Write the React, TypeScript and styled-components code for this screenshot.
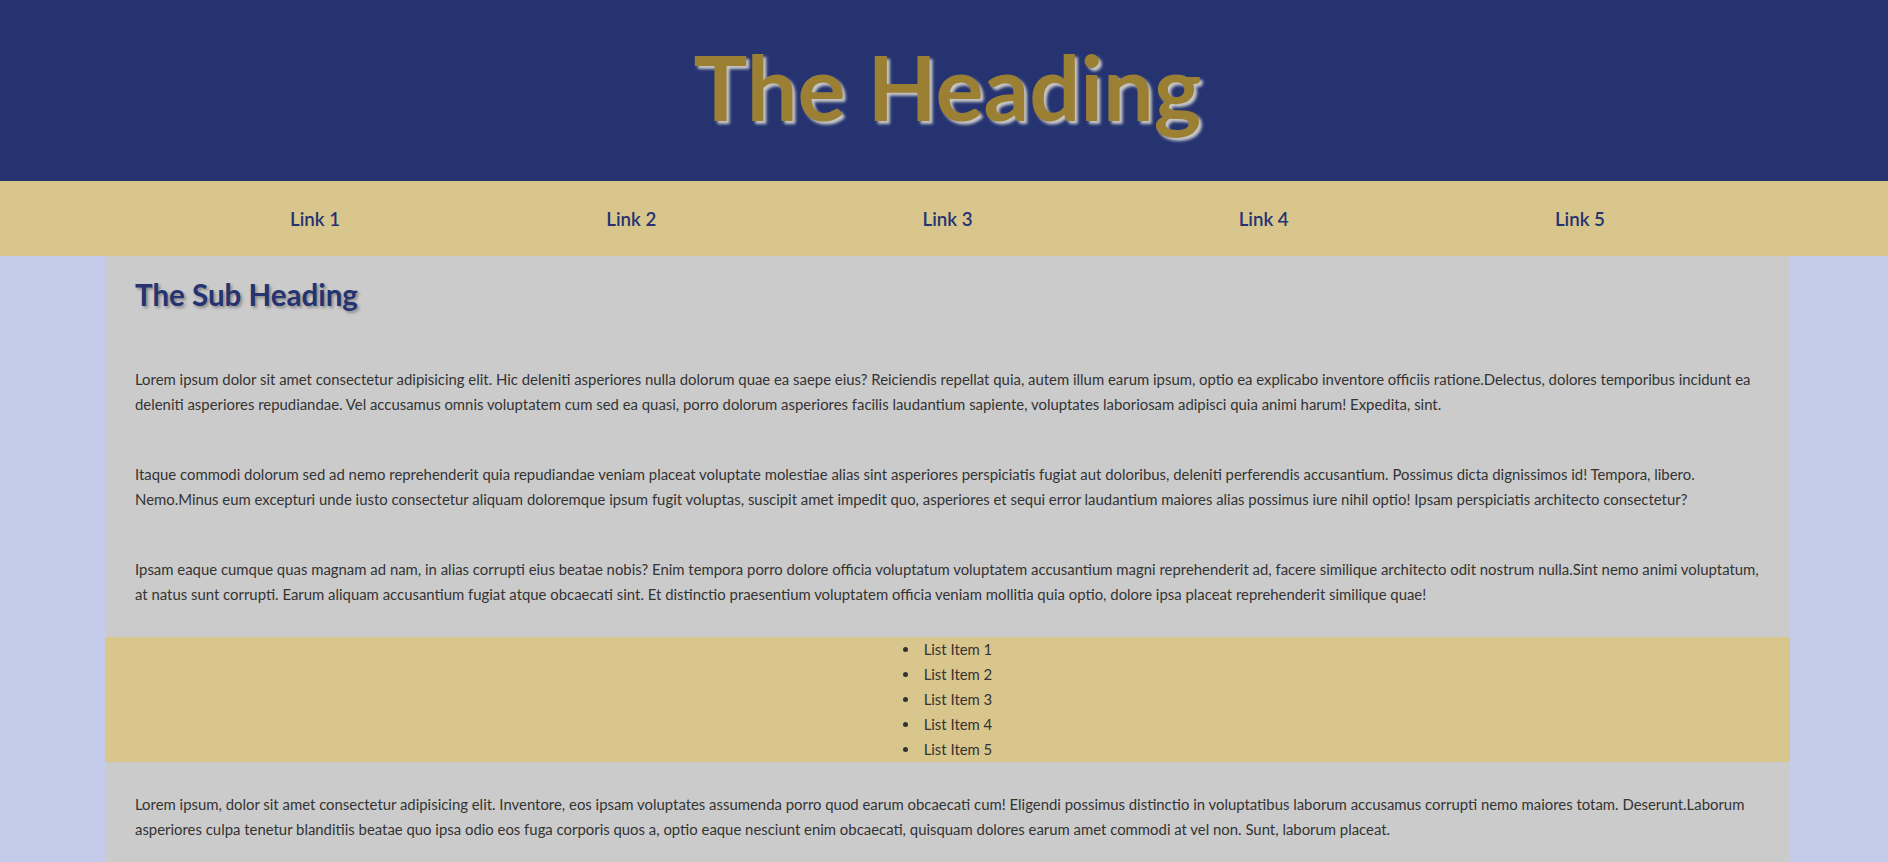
import React from "react";
import styled, { createGlobalStyle } from "styled-components";

const Global = createGlobalStyle`
  html, body { margin: 0; padding: 0; }
  body {
    background: #c5cbeb;
    font-family: Lato, "Open Sans", sans-serif;
    overflow: hidden;
  }
  * { box-sizing: border-box; }
`;

const Page = styled.div`
  width: 1895px;
`;

const Header = styled.header`
  background: #253370;
  padding: 32px 0 41px;
  text-align: center;
`;

const Title = styled.h1`
  margin: 0;
  font-size: 90px;
  font-weight: 700;
  line-height: 108px;
  color: #9b7f33;
  text-shadow: 3px 3px 3px #c8c8c8;
`;

const Nav = styled.nav`
  background: #d9c68d;
  height: 75px;
  display: flex;
  align-items: center;
`;

const NavList = styled.ul`
  list-style: none;
  margin: 0 auto;
  padding: 0;
  width: 1581px;
  display: grid;
  grid-template-columns: repeat(5, 1fr);
`;

const NavItem = styled.li`
  text-align: center;
`;

const NavLink = styled.a`
  color: #253370;
  font-size: 18.7px;
  font-weight: 600;
  text-decoration: none;
`;

const Main = styled.main`
  width: 1685px;
  margin: 0 auto;
  background: #cbcbcb;
  padding-top: 21px;
`;

const SubHeading = styled.h2`
  margin: 0 0 40px;
  padding: 0 30px;
  font-size: 29.5px;
  font-weight: 700;
  line-height: 1.2;
  color: #253370;
  text-shadow: 2px 2px 3px #8a8a8a;
`;

const Para = styled.p`
  margin: 15px 0;
  padding: 15px 30px;
  font-size: 14.9px;
  line-height: 25px;
  color: #333;
`;

const List = styled.ul`
  margin: 0;
  padding: 0;
  background: #d9c68d;
  list-style: disc inside;
  text-align: center;
`;

const ListItem = styled.li`
  font-size: 14.9px;
  line-height: 25px;
  color: #333;
`;

const Section = styled.section`
  overflow: hidden;
`;

const links = ["Link 1", "Link 2", "Link 3", "Link 4", "Link 5"];
const items = ["List Item 1", "List Item 2", "List Item 3", "List Item 4", "List Item 5"];

export default function App() {
  return (
    <Page>
      <Global />
      <Header>
        <Title>The Heading</Title>
      </Header>
      <Nav>
        <NavList>
          {links.map((l) => (
            <NavItem key={l}>
              <NavLink href="#">{l}</NavLink>
            </NavItem>
          ))}
        </NavList>
      </Nav>
      <Main>
        <Section>
          <SubHeading>The Sub Heading</SubHeading>
          <Para>
            Lorem ipsum dolor sit amet consectetur adipisicing elit. Hic deleniti asperiores nulla dolorum quae ea saepe eius? Reiciendis repellat quia, autem illum earum ipsum, optio ea explicabo inventore officiis ratione.Delectus, dolores temporibus incidunt ea deleniti asperiores repudiandae. Vel accusamus omnis voluptatem cum sed ea quasi, porro dolorum asperiores facilis laudantium sapiente, voluptates laboriosam adipisci quia animi harum! Expedita, sint.
          </Para>
          <Para>
            Itaque commodi dolorum sed ad nemo reprehenderit quia repudiandae veniam placeat voluptate molestiae alias sint asperiores perspiciatis fugiat aut doloribus, deleniti perferendis accusantium. Possimus dicta dignissimos id! Tempora, libero. Nemo.Minus eum excepturi unde iusto consectetur aliquam doloremque ipsum fugit voluptas, suscipit amet impedit quo, asperiores et sequi error laudantium maiores alias possimus iure nihil optio! Ipsam perspiciatis architecto consectetur?
          </Para>
          <Para>
            Ipsam eaque cumque quas magnam ad nam, in alias corrupti eius beatae nobis? Enim tempora porro dolore officia voluptatum voluptatem accusantium magni reprehenderit ad, facere similique architecto odit nostrum nulla.Sint nemo animi voluptatum, at natus sunt corrupti. Earum aliquam accusantium fugiat atque obcaecati sint. Et distinctio praesentium voluptatem officia veniam mollitia quia optio, dolore ipsa placeat reprehenderit similique quae!
          </Para>
        </Section>
        <List>
          {items.map((i) => (
            <ListItem key={i}>{i}</ListItem>
          ))}
        </List>
        <Section>
          <Para>
            Lorem ipsum, dolor sit amet consectetur adipisicing elit. Inventore, eos ipsam voluptates assumenda porro quod earum obcaecati cum! Eligendi possimus distinctio in voluptatibus laborum accusamus corrupti nemo maiores totam. Deserunt.Laborum asperiores culpa tenetur blanditiis beatae quo ipsa odio eos fuga corporis quos a, optio eaque nesciunt enim obcaecati, quisquam dolores earum amet commodi at vel non. Sunt, laborum placeat.
          </Para>
        </Section>
      </Main>
    </Page>
  );
}
